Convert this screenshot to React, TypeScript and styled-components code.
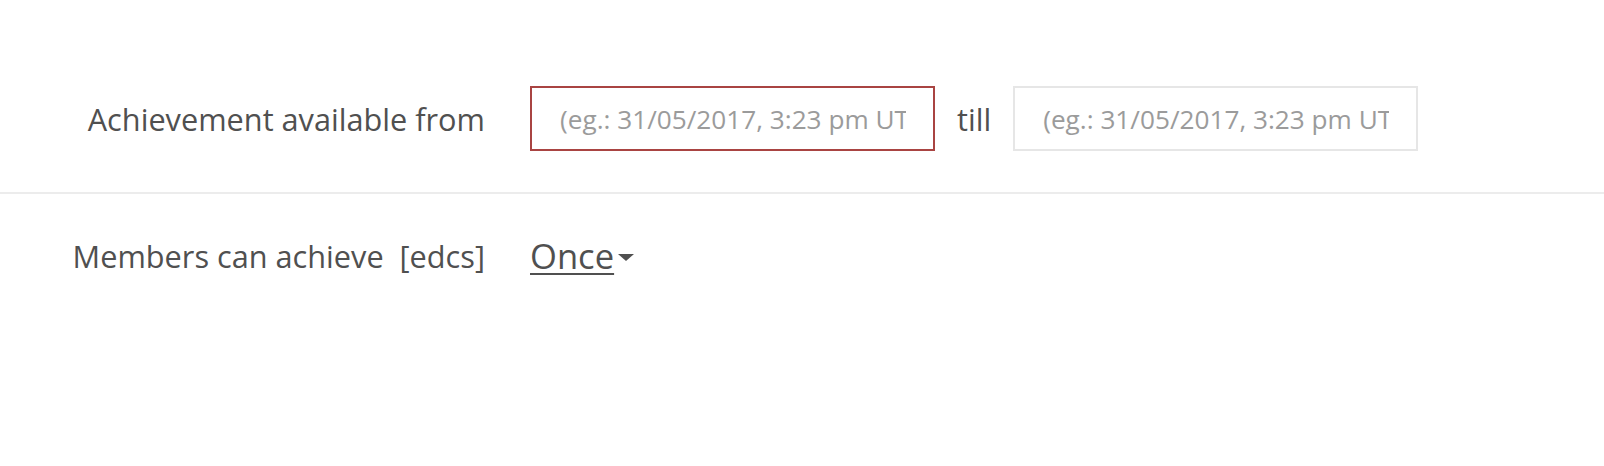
import React from "react";
import styled, { createGlobalStyle } from "styled-components";

const GlobalStyle = createGlobalStyle`
  html, body {
    margin: 0;
    padding: 0;
    background: #fff;
  }
  body {
    font-family: "Open Sans", "Liberation Sans", sans-serif;
    color: #505050;
  }
`;

const Form = styled.div`
  width: 1604px;
  display: flex;
  flex-direction: column;
`;

const Row = styled.div<{ $divider?: boolean }>`
  display: grid;
  grid-template-columns: 485px auto;
  column-gap: 45px;
  align-items: center;
  padding: ${(p) => (p.$divider ? "86px 0 41px" : "38px 0 0")};
  border-bottom: ${(p) => (p.$divider ? "2px solid #ececec" : "none")};
`;

const Label = styled.label`
  text-align: right;
  font-size: 30.7px;
  color: #505050;
  white-space: pre;
`;

const Controls = styled.div`
  display: flex;
  align-items: center;
  gap: 22px;
`;

const DateInput = styled.input<{ $error?: boolean }>`
  box-sizing: border-box;
  width: 405px;
  height: 65px;
  padding: 0 27px 0 28px;
  border: 2px solid ${(p) => (p.$error ? "#a94442" : "#e6e6e6")};
  border-radius: 0;
  outline: none;
  font-family: "Open Sans", "Liberation Sans", sans-serif;
  font-size: 26.2px;
  color: #505050;
  background: #fff;
  &::placeholder {
    color: #9b9b9b;
  }
`;

const Till = styled.span`
  font-size: 30.7px;
  color: #505050;
`;

const Dropdown = styled.button`
  display: flex;
  align-items: center;
  gap: 4px;
  padding: 0;
  border: none;
  background: none;
  font-family: "Open Sans", "Liberation Sans", sans-serif;
  font-size: 34.6px;
  color: #505050;
  cursor: pointer;
  span {
    text-decoration: underline;
    text-underline-offset: 4px;
    text-decoration-thickness: 2px;
  }
`;

const Caret = styled.i`
  width: 0;
  height: 0;
  border-left: 8.5px solid transparent;
  border-right: 8.5px solid transparent;
  border-top: 7.5px solid #505050;
  margin-top: 4px;
`;

const placeholder = "(eg.: 31/05/2017, 3:23 pm UTC)";

export default function App() {
  return (
    <>
      <GlobalStyle />
      <Form>
        <Row $divider>
          <Label>Achievement available from</Label>
          <Controls>
            <DateInput $error placeholder={placeholder} />
            <Till>till</Till>
            <DateInput placeholder={placeholder} />
          </Controls>
        </Row>
        <Row>
          <Label>{"Members can achieve  [edcs]"}</Label>
          <Controls>
            <Dropdown>
              <span>Once</span>
              <Caret />
            </Dropdown>
          </Controls>
        </Row>
      </Form>
    </>
  );
}
